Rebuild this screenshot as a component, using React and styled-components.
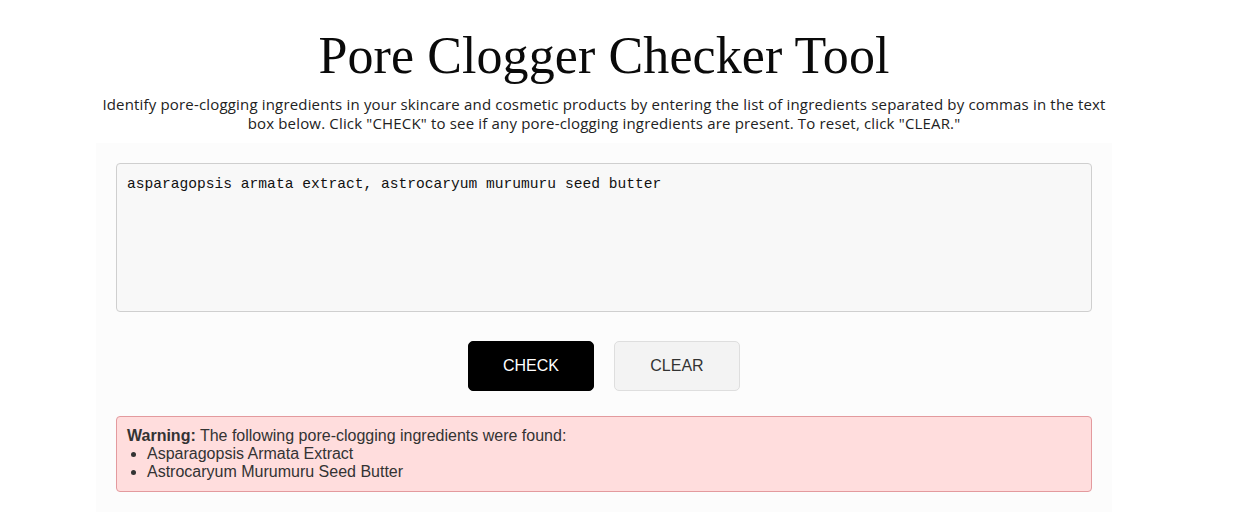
import React, { useState } from "react";
import styled, { createGlobalStyle } from "styled-components";

const Global = createGlobalStyle`
  html, body { margin: 0; padding: 0; background: #ffffff; }
  body { font-family: "Liberation Sans", Arial, sans-serif; }
`;

const Page = styled.div`
  width: 1208px;
  display: flex;
  flex-direction: column;
  align-items: center;
`;

const Title = styled.h1`
  margin: 26px 0 0;
  font-family: "Liberation Serif", "DejaVu Serif", serif;
  font-weight: 400;
  font-size: 52px;
  line-height: 60px;
  color: #0a0a0a;
  letter-spacing: 0.1px;
`;

const Intro = styled.p`
  margin: 9px 0 0;
  width: 1014px;
  text-align: center;
  font-family: "Open Sans", "Lato", sans-serif;
  font-size: 15px;
  letter-spacing: 0.17px;
  line-height: 19px;
  color: #222;
`;

const Panel = styled.div`
  margin-top: 10px;
  width: 1016px;
  box-sizing: border-box;
  padding: 20px;
  background: #fcfcfc;
  display: flex;
  flex-direction: column;
  align-items: stretch;
`;

const Input = styled.textarea`
  box-sizing: border-box;
  height: 149px;
  width: 100%;
  resize: none;
  padding: 11px 10px;
  border: 1px solid #cfcfcf;
  border-radius: 4px;
  background: #f8f8f8;
  font-family: "Liberation Mono", "DejaVu Sans Mono", monospace;
  font-size: 14.6px;
  line-height: 18px;
  color: #111;
  outline: none;
`;

const Actions = styled.div`
  display: flex;
  justify-content: center;
  gap: 20px;
  margin-top: 29px;
`;

const Button = styled.button`
  width: 126px;
  height: 50px;
  border-radius: 5px;
  font-family: "Liberation Sans", Arial, sans-serif;
  font-size: 16px;
  cursor: pointer;
  border: 1px solid ${(p) => (p.$primary ? "#000" : "#dedede")};
  background: ${(p) => (p.$primary ? "#000" : "#f3f3f3")};
  color: ${(p) => (p.$primary ? "#fff" : "#333")};
`;

const Alert = styled.div`
  margin-top: 25px;
  box-sizing: border-box;
  border: 1px solid #e39a9e;
  border-radius: 4px;
  background: #ffdddd;
  padding: 10px 10px 10px;
  font-family: "Liberation Sans", Arial, sans-serif;
  font-size: 16px;
  line-height: 18px;
  color: #333;
`;

const List = styled.ul`
  margin: 0;
  padding-left: 20px;
`;

const ingredients = ["Asparagopsis Armata Extract", "Astrocaryum Murumuru Seed Butter"];

export default function App() {
  const [text, setText] = useState("asparagopsis armata extract, astrocaryum murumuru seed butter");
  return (
    <Page>
      <Global />
      <Title>Pore Clogger Checker Tool</Title>
      <Intro>
        Identify pore-clogging ingredients in your skincare and cosmetic products by entering the list of ingredients separated by commas in the text box below. Click "CHECK" to see if any pore-clogging ingredients are present. To reset, click "CLEAR."
      </Intro>
      <Panel>
        <Input value={text} onChange={(e) => setText(e.target.value)} spellCheck={false} />
        <Actions>
          <Button $primary>CHECK</Button>
          <Button>CLEAR</Button>
        </Actions>
        <Alert>
          <strong>Warning:</strong> The following pore-clogging ingredients were found:
          <List>
            {ingredients.map((i) => (
              <li key={i}>{i}</li>
            ))}
          </List>
        </Alert>
      </Panel>
    </Page>
  );
}
